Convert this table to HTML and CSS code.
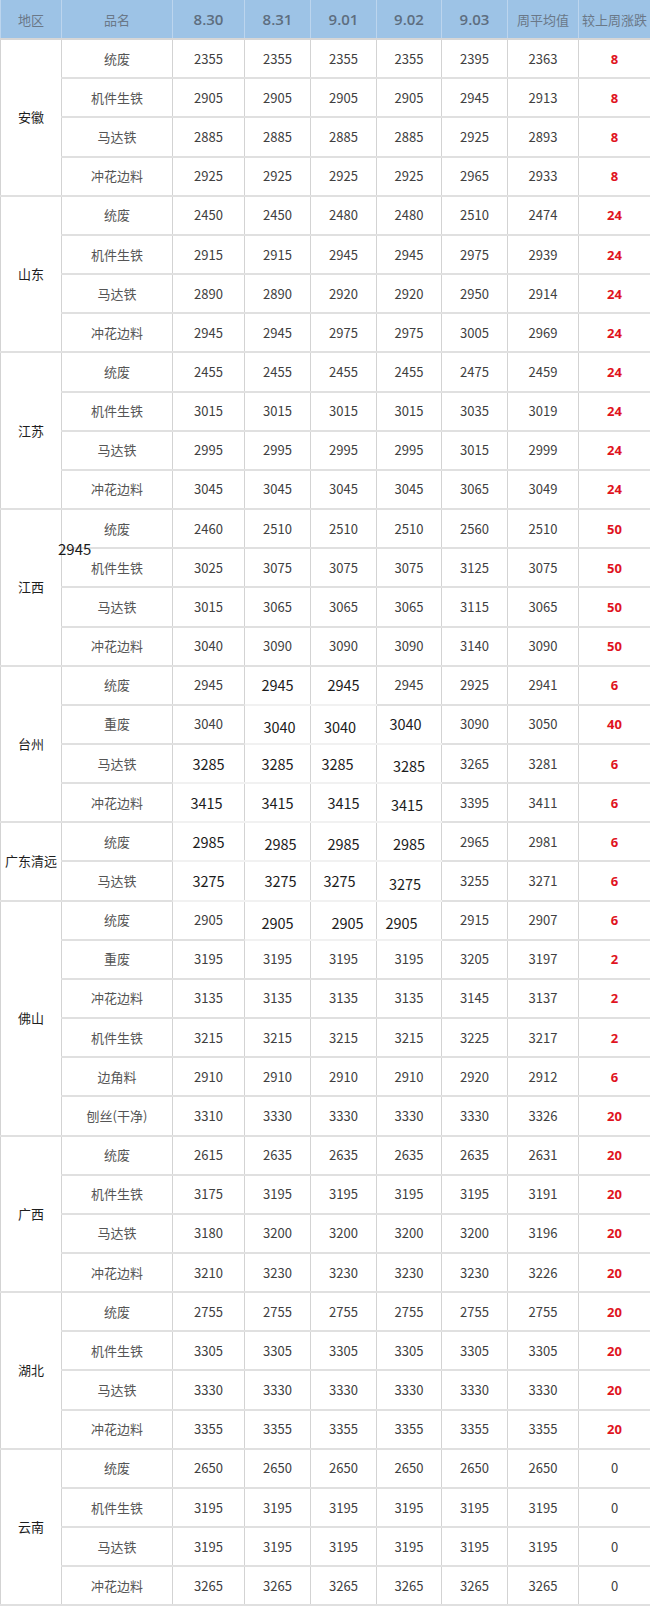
FILE: index.html
```html
<!DOCTYPE html>
<html lang="zh-CN">
<head>
<meta charset="utf-8">
<title>废钢价格周报</title>
<link rel="stylesheet" href="styles.css">
</head>
<body>
<div class="sheet">
<table class="grid">
<colgroup>
<col class="c-area"><col class="c-name"><col class="c-d1"><col class="c-d2"><col class="c-d3"><col class="c-d4"><col class="c-d5"><col class="c-avg"><col class="c-chg">
</colgroup>
<thead>
<tr><th class="cn">地区</th><th class="cn">品名</th><th>8.30</th><th>8.31</th><th>9.01</th><th>9.02</th><th>9.03</th><th class="cn">周平均值</th><th class="cn">较上周涨跌</th></tr>
</thead>
<tbody>
<tr class="first"><td class="area" rowspan="4">安徽</td><td class="name">统废</td><td>2355</td><td>2355</td><td>2355</td><td>2355</td><td>2395</td><td>2363</td><td class="up">8</td></tr>
<tr><td class="name">机件生铁</td><td>2905</td><td>2905</td><td>2905</td><td>2905</td><td>2945</td><td>2913</td><td class="up">8</td></tr>
<tr><td class="name">马达铁</td><td>2885</td><td>2885</td><td>2885</td><td>2885</td><td>2925</td><td>2893</td><td class="up">8</td></tr>
<tr><td class="name">冲花边料</td><td>2925</td><td>2925</td><td>2925</td><td>2925</td><td>2965</td><td>2933</td><td class="up">8</td></tr>

<tr class="first"><td class="area" rowspan="4">山东</td><td class="name">统废</td><td>2450</td><td>2450</td><td>2480</td><td>2480</td><td>2510</td><td>2474</td><td class="up">24</td></tr>
<tr><td class="name">机件生铁</td><td>2915</td><td>2915</td><td>2945</td><td>2945</td><td>2975</td><td>2939</td><td class="up">24</td></tr>
<tr><td class="name">马达铁</td><td>2890</td><td>2890</td><td>2920</td><td>2920</td><td>2950</td><td>2914</td><td class="up">24</td></tr>
<tr><td class="name">冲花边料</td><td>2945</td><td>2945</td><td>2975</td><td>2975</td><td>3005</td><td>2969</td><td class="up">24</td></tr>

<tr class="first"><td class="area" rowspan="4">江苏</td><td class="name">统废</td><td>2455</td><td>2455</td><td>2455</td><td>2455</td><td>2475</td><td>2459</td><td class="up">24</td></tr>
<tr><td class="name">机件生铁</td><td>3015</td><td>3015</td><td>3015</td><td>3015</td><td>3035</td><td>3019</td><td class="up">24</td></tr>
<tr><td class="name">马达铁</td><td>2995</td><td>2995</td><td>2995</td><td>2995</td><td>3015</td><td>2999</td><td class="up">24</td></tr>
<tr><td class="name">冲花边料</td><td>3045</td><td>3045</td><td>3045</td><td>3045</td><td>3065</td><td>3049</td><td class="up">24</td></tr>

<tr class="first"><td class="area" rowspan="4">江西</td><td class="name">统废</td><td>2460</td><td>2510</td><td>2510</td><td>2510</td><td>2560</td><td>2510</td><td class="up">50</td></tr>
<tr><td class="name">机件生铁</td><td>3025</td><td>3075</td><td>3075</td><td>3075</td><td>3125</td><td>3075</td><td class="up">50</td></tr>
<tr><td class="name">马达铁</td><td>3015</td><td>3065</td><td>3065</td><td>3065</td><td>3115</td><td>3065</td><td class="up">50</td></tr>
<tr><td class="name">冲花边料</td><td>3040</td><td>3090</td><td>3090</td><td>3090</td><td>3140</td><td>3090</td><td class="up">50</td></tr>

<tr class="first"><td class="area" rowspan="4">台州</td><td class="name">统废</td><td>2945</td><td class="pz">2945</td><td class="pz">2945</td><td>2945</td><td>2925</td><td>2941</td><td class="up">6</td></tr>
<tr><td class="name">重废</td><td>3040</td><td class="pz r2 dn">3040</td><td class="pz l3 dn">3040</td><td class="pz l3">3040</td><td>3090</td><td>3050</td><td class="up">40</td></tr>
<tr><td class="name">马达铁</td><td class="pz">3285</td><td class="pz">3285</td><td class="pz l6">3285</td><td class="pz dn">3285</td><td>3265</td><td>3281</td><td class="up">6</td></tr>
<tr><td class="name">冲花边料</td><td class="pz l2">3415</td><td class="pz">3415</td><td class="pz">3415</td><td class="pz l2 dn">3415</td><td>3395</td><td>3411</td><td class="up">6</td></tr>

<tr class="first"><td class="area" rowspan="2">广东清远</td><td class="name">统废</td><td class="pz">2985</td><td class="pz r3 dn">2985</td><td class="pz dn">2985</td><td class="pz dn">2985</td><td>2965</td><td>2981</td><td class="up">6</td></tr>
<tr><td class="name">马达铁</td><td class="pz">3275</td><td class="pz r3">3275</td><td class="pz l4">3275</td><td class="pz l4 dn">3275</td><td>3255</td><td>3271</td><td class="up">6</td></tr>

<tr class="first"><td class="area" rowspan="6">佛山</td><td class="name">统废</td><td>2905</td><td class="pz dn">2905</td><td class="pz r4 dn">2905</td><td class="pz l7 dn">2905</td><td>2915</td><td>2907</td><td class="up">6</td></tr>
<tr><td class="name">重废</td><td>3195</td><td>3195</td><td>3195</td><td>3195</td><td>3205</td><td>3197</td><td class="up">2</td></tr>
<tr><td class="name">冲花边料</td><td>3135</td><td>3135</td><td>3135</td><td>3135</td><td>3145</td><td>3137</td><td class="up">2</td></tr>
<tr><td class="name">机件生铁</td><td>3215</td><td>3215</td><td>3215</td><td>3215</td><td>3225</td><td>3217</td><td class="up">2</td></tr>
<tr><td class="name">边角料</td><td>2910</td><td>2910</td><td>2910</td><td>2910</td><td>2920</td><td>2912</td><td class="up">6</td></tr>
<tr><td class="name">刨丝(干净)</td><td>3310</td><td>3330</td><td>3330</td><td>3330</td><td>3330</td><td>3326</td><td class="up">20</td></tr>

<tr class="first"><td class="area" rowspan="4">广西</td><td class="name">统废</td><td>2615</td><td>2635</td><td>2635</td><td>2635</td><td>2635</td><td>2631</td><td class="up">20</td></tr>
<tr><td class="name">机件生铁</td><td>3175</td><td>3195</td><td>3195</td><td>3195</td><td>3195</td><td>3191</td><td class="up">20</td></tr>
<tr><td class="name">马达铁</td><td>3180</td><td>3200</td><td>3200</td><td>3200</td><td>3200</td><td>3196</td><td class="up">20</td></tr>
<tr><td class="name">冲花边料</td><td>3210</td><td>3230</td><td>3230</td><td>3230</td><td>3230</td><td>3226</td><td class="up">20</td></tr>

<tr class="first"><td class="area" rowspan="4">湖北</td><td class="name">统废</td><td>2755</td><td>2755</td><td>2755</td><td>2755</td><td>2755</td><td>2755</td><td class="up">20</td></tr>
<tr><td class="name">机件生铁</td><td>3305</td><td>3305</td><td>3305</td><td>3305</td><td>3305</td><td>3305</td><td class="up">20</td></tr>
<tr><td class="name">马达铁</td><td>3330</td><td>3330</td><td>3330</td><td>3330</td><td>3330</td><td>3330</td><td class="up">20</td></tr>
<tr><td class="name">冲花边料</td><td>3355</td><td>3355</td><td>3355</td><td>3355</td><td>3355</td><td>3355</td><td class="up">20</td></tr>

<tr class="first"><td class="area" rowspan="4">云南</td><td class="name">统废</td><td>2650</td><td>2650</td><td>2650</td><td>2650</td><td>2650</td><td>2650</td><td>0</td></tr>
<tr><td class="name">机件生铁</td><td>3195</td><td>3195</td><td>3195</td><td>3195</td><td>3195</td><td>3195</td><td>0</td></tr>
<tr><td class="name">马达铁</td><td>3195</td><td>3195</td><td>3195</td><td>3195</td><td>3195</td><td>3195</td><td>0</td></tr>
<tr><td class="name">冲花边料</td><td>3265</td><td>3265</td><td>3265</td><td>3265</td><td>3265</td><td>3265</td><td>0</td></tr>
</tbody>
</table>
<span class="stray">2945</span>
</div>
</body>
</html>
```

FILE: styles.css
```css
html, body {
  margin: 0;
  padding: 0;
  background: #ffffff;
}

.sheet {
  position: relative;
  width: 650px;
  height: 1606px;
  overflow: hidden;
}

.grid {
  width: 650px;
  height: 1606px;
  table-layout: fixed;
  border-collapse: collapse;
  font-family: "Noto Sans CJK SC", "Noto Sans", sans-serif;
  font-size: 13px;
  color: #404040;
}

.c-area { width: 61px; }
.c-name { width: 111px; }
.c-d1 { width: 72px; }
.c-d2 { width: 66px; }
.c-d3 { width: 66px; }
.c-d4 { width: 65px; }
.c-d5 { width: 66px; }
.c-avg { width: 71px; }
.c-chg { width: 72px; }

.grid tr {
  height: 39.17px;
}

.grid th {
  background: #9dc3e6;
  color: #5d6e80;
  font-size: 15px;
  font-weight: 600;
  font-family: "Open Sans", "Noto Sans", sans-serif;
  text-align: center;
  vertical-align: middle;
  padding: 0;
  border-left: 1px solid #bcd5ee;
  border-right: 1px solid #bcd5ee;
  border-bottom: 1px solid #b3cbe3;
}

.grid th.cn {
  font-family: "Noto Sans CJK SC", sans-serif;
  font-size: 13px;
  font-weight: 400;
  color: #6a7888;
}

.grid td {
  text-align: center;
  vertical-align: middle;
  padding: 0;
  border-left: 1px solid #d3d3d3;
  border-right: 1px solid #d3d3d3;
  border-top: 2px solid #e0e0e0;
  border-bottom: 2px solid #e0e0e0;
  line-height: 18px;
  white-space: nowrap;
}

.grid tr.first td {
  border-top: 2px solid #d6d6d6;
}

.grid td.area {
  color: #1e1e1e;
  font-size: 13px;
}

.grid td.name {
  color: #555555;
}

.grid td.up {
  color: #e0141e;
  font-weight: 700;
  font-family: "Open Sans", "Noto Sans", sans-serif;
}

/* pasted-over cells in the original image */
.grid td.pz {
  font-size: 14.5px;
  color: #1c1c1c;
  border-top-color: #f1f1f1;
  border-bottom-color: #f1f1f1;
}

.grid td.dn { padding-top: 5px; }
.grid td.l2 { padding-right: 4px; }
.grid td.l3 { padding-right: 7px; }
.grid td.l4 { padding-right: 8px; }
.grid td.l6 { padding-right: 12px; }
.grid td.l7 { padding-right: 15px; }
.grid td.r2 { padding-left: 4px; }
.grid td.r3 { padding-left: 6px; }
.grid td.r4 { padding-left: 8px; }

.stray {
  position: absolute;
  left: 58px;
  top: 539px;
  font-family: "Noto Sans CJK SC", sans-serif;
  font-size: 15px;
  line-height: 20px;
  color: #1a1a1a;
}
```
